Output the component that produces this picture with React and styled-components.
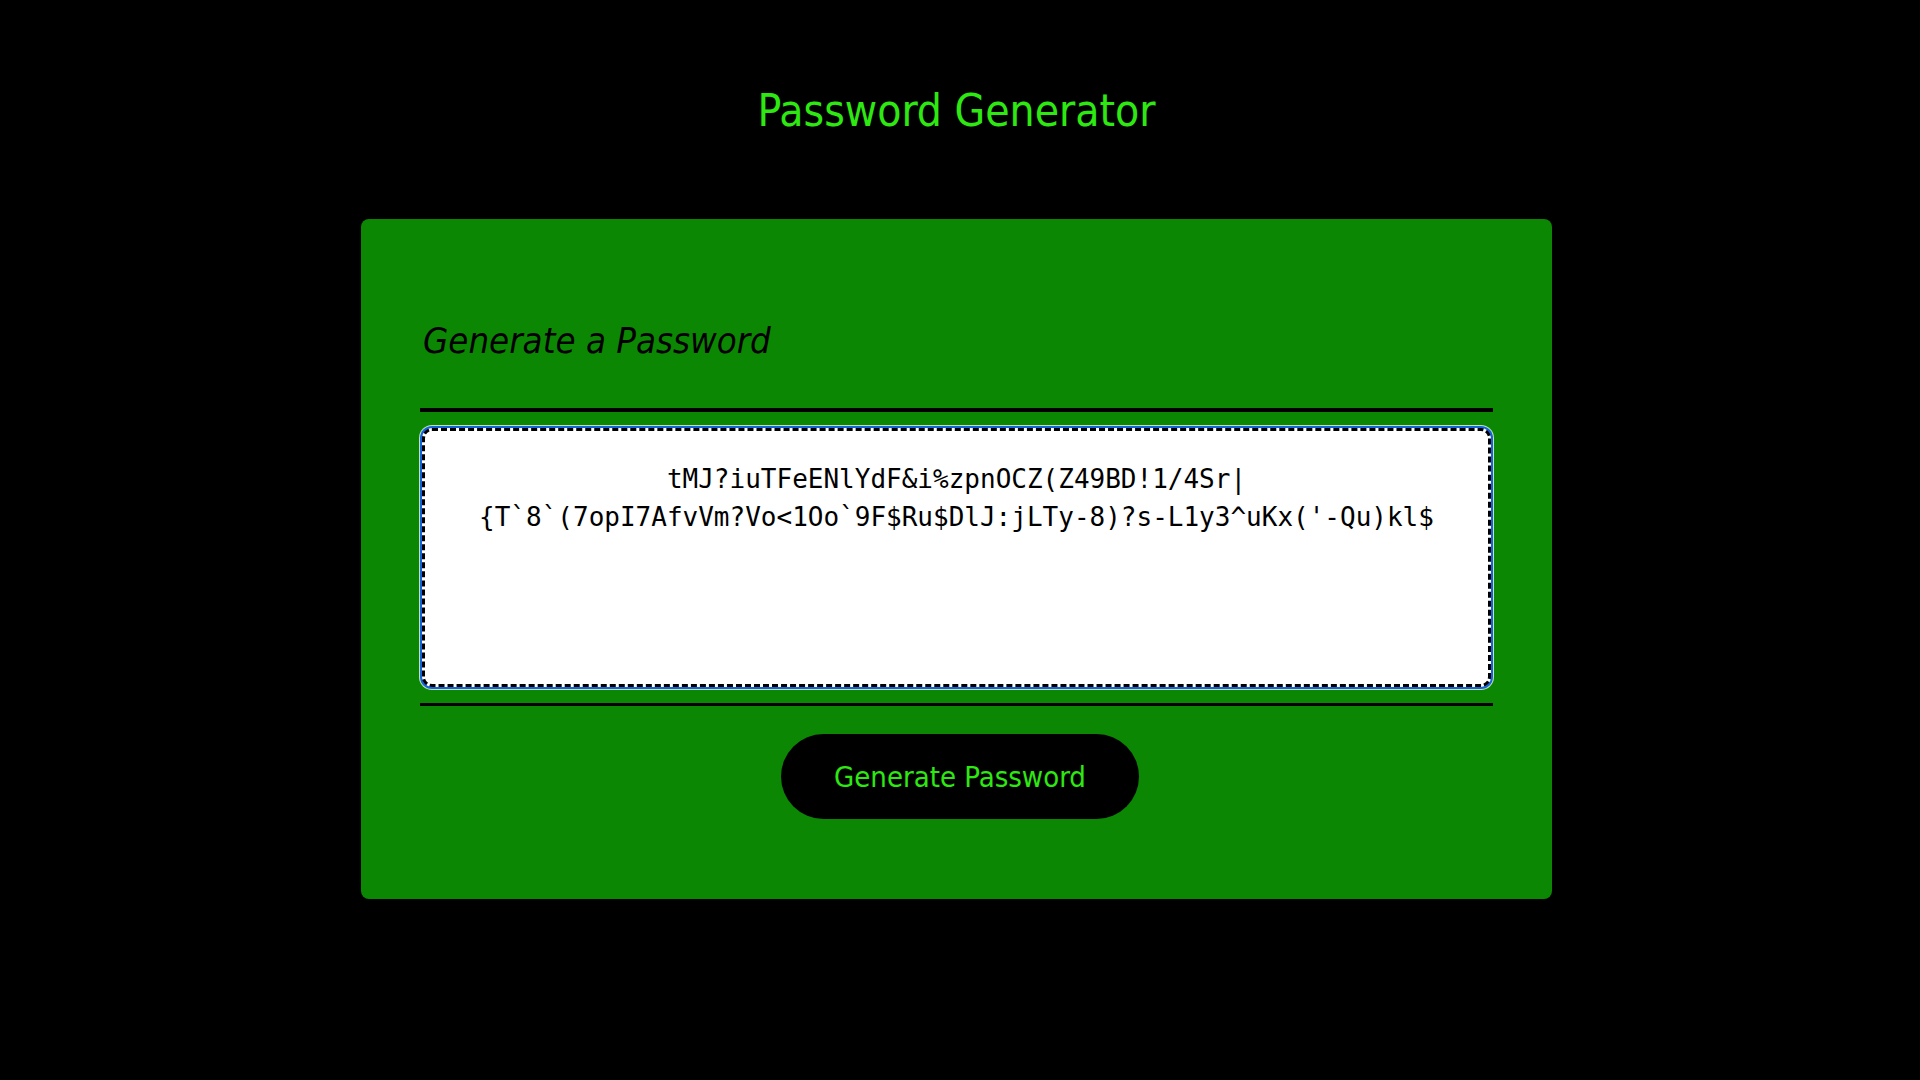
import React from 'react';
import styled, { createGlobalStyle } from 'styled-components';

const password =
  "tMJ?iuTFeENlYdF&i%zpnOCZ(Z49BD!1/4Sr|\n{T`8`(7opI7AfvVm?Vo<1Oo`9F$Ru$DlJ:jLTy-8)?s-L1y3^uKx('-Qu)kl$";

const GlobalStyle = createGlobalStyle`
  html, body {
    margin: 0;
    background: #000;
  }
  body {
    font-family: "DejaVu Sans Condensed", "Liberation Sans", sans-serif;
  }
`;

const Page = styled.div`
  min-height: 1080px;
  padding: 83px 7px 0 0;
  box-sizing: border-box;
  display: flex;
  flex-direction: column;
  align-items: center;
`;

const Title = styled.h1`
  margin: 0 0 80px;
  font-size: 44px;
  line-height: 56px;
  font-weight: 400;
  color: #2ee812;
`;

const Card = styled.div`
  width: 1191px;
  box-sizing: border-box;
  padding: 98px 59px 80px;
  background: #0c8703;
  border-radius: 8px;
  display: flex;
  flex-direction: column;
`;

const Heading = styled.h2`
  margin: 0 0 43px 3px;
  font-size: 36.3px;
  line-height: 48px;
  font-style: italic;
  font-weight: 400;
  color: #000;
`;

const Rule = styled.div`
  height: ${(p) => p.$thick || 4}px;
  background: #000;
`;

const Output = styled.textarea`
  display: block;
  margin: 16px 2px;
  height: 259px;
  box-sizing: border-box;
  padding: 29px 30px;
  border: 3px dashed #000;
  border-radius: 10px;
  background: #fff;
  color: #000;
  font-family: "DejaVu Sans Mono", "Liberation Mono", monospace;
  font-size: 26px;
  line-height: 38px;
  text-align: center;
  resize: none;
  overflow: hidden;
  outline: none;
  box-shadow: 0 0 0 2px #1462dc, 0 0 0 3px rgba(255, 255, 255, 0.75);
`;

const Actions = styled.div`
  display: flex;
  justify-content: center;
  margin-top: 28px;
  padding-left: 7px;
`;

const GenerateButton = styled.button`
  width: 358px;
  height: 85px;
  border: none;
  border-radius: 43px;
  background: #000;
  color: #2ee812;
  font-family: inherit;
  font-size: 29px;
  cursor: pointer;
`;

export default function App() {
  return (
    <>
      <GlobalStyle />
      <Page>
        <Title>Password Generator</Title>
        <Card>
          <Heading>Generate a Password</Heading>
          <Rule />
          <Output readOnly value={password} />
          <Rule $thick={3} />
          <Actions>
            <GenerateButton>Generate Password</GenerateButton>
          </Actions>
        </Card>
      </Page>
    </>
  );
}
